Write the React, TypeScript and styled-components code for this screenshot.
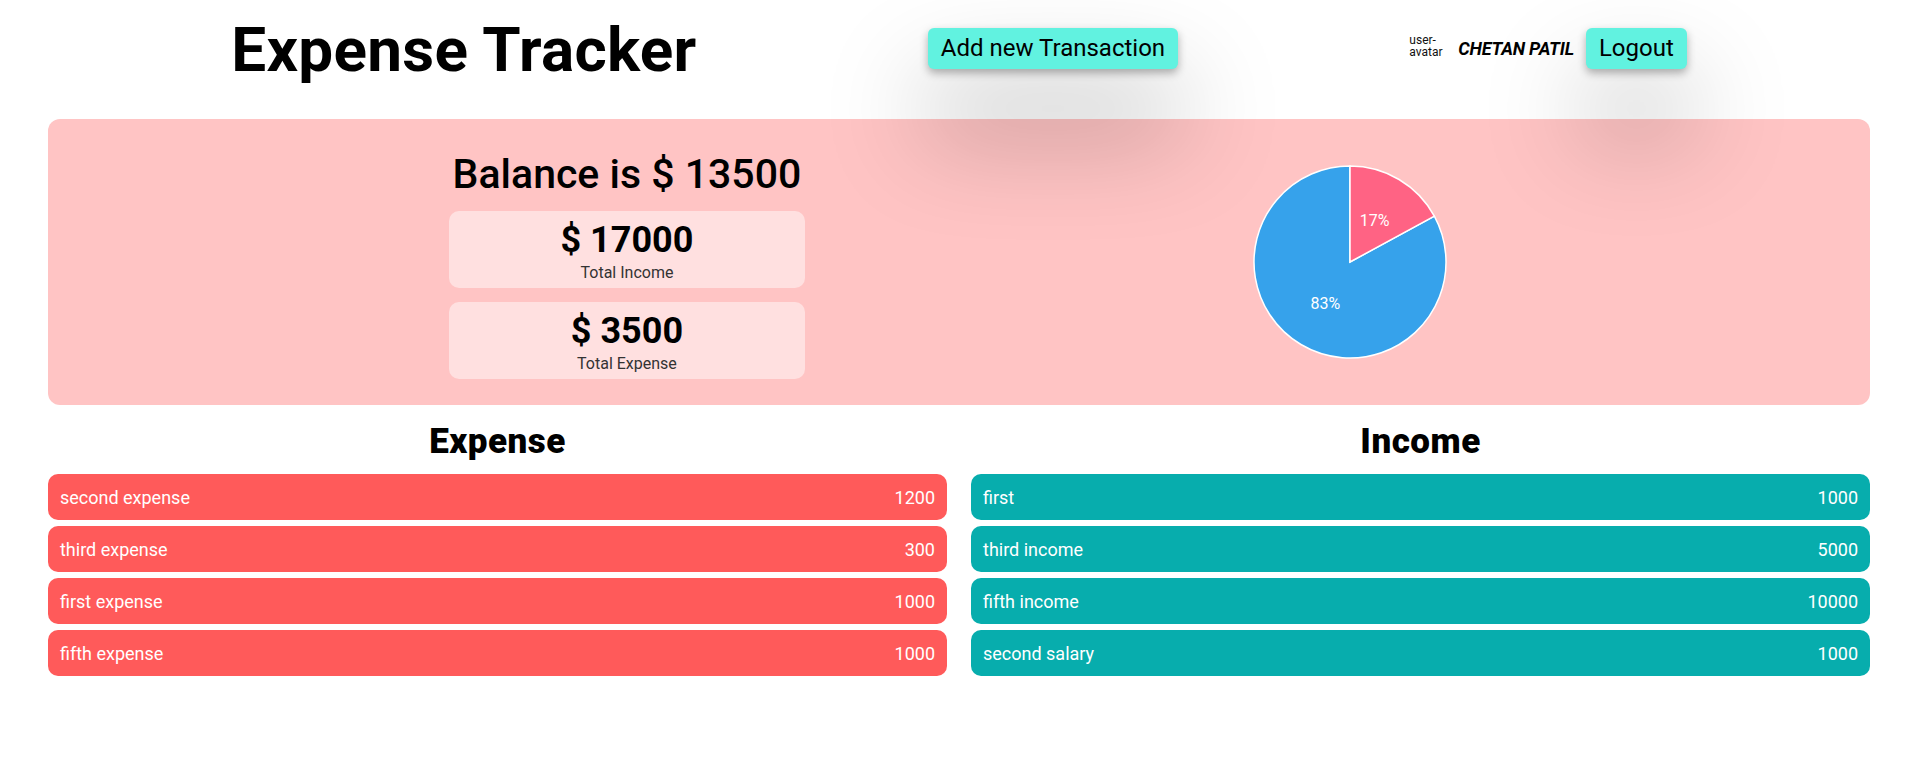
import React from "react";
import styled, { createGlobalStyle } from "styled-components";

const Global = createGlobalStyle`
  html, body { margin: 0; padding: 0; background: #ffffff; }
  body { font-family: Roboto, "Noto Sans", Arial, sans-serif; color: #000; }
  * { box-sizing: border-box; }
`;

const Page = styled.div`
  width: 100%;
  min-height: 760px;
`;

const Header = styled.header`
  display: flex;
  justify-content: space-evenly;
  align-items: center;
  height: 96px;
`;

const Title = styled.h1`
  margin: 0;
  font-size: 62px;
  font-weight: 700;
  letter-spacing: 0.3px;
  line-height: 1;
  padding-top: 4px;
`;

const ActionButton = styled.button`
  position: relative;
  z-index: 2;
  height: 41px;
  padding: 0 13px;
  border: none;
  border-radius: 6px;
  background: #61f2e0;
  color: #000;
  font-family: inherit;
  font-size: 24px;
  font-weight: 400;
  cursor: pointer;
  box-shadow: rgba(0, 0, 0, 0.3) 0px 4px 8px, rgba(0, 0, 0, 0.26) 0px 60px 100px 6px;
`;

const UserBox = styled.div`
  display: flex;
  align-items: center;
  gap: 12px;
`;

const AvatarAlt = styled.span`
  width: 37px;
  font-size: 12px;
  line-height: 12px;
  color: #111;
  margin-top: -4px;
`;

const UserName = styled.span`
  font-size: 18px;
  font-weight: 700;
  font-style: italic;
  letter-spacing: -0.2px;
`;

const SummaryPanel = styled.section`
  width: 95%;
  height: 286px;
  margin: 23px auto 0;
  border-radius: 12px;
  background: #ffc4c4;
  display: flex;
  align-items: center;
  padding-left: 401px;
  gap: 401px;
`;

const BalanceBlock = styled.div`
  width: 356px;
  display: flex;
  flex-direction: column;
  gap: 14px;
  margin-top: 6px;
`;

const BalanceText = styled.h2`
  margin: 0 -20px -1px;
  text-align: center;
  white-space: nowrap;
  font-size: 41px;
  font-weight: 500;
  line-height: 47px;
`;

const StatCard = styled.div`
  height: 77px;
  border-radius: 10px;
  background: #ffe0e0;
  display: flex;
  flex-direction: column;
  align-items: center;
  padding-top: 6px;
`;

const StatAmount = styled.div`
  font-size: 36px;
  font-weight: 700;
  line-height: 46px;
`;

const StatLabel = styled.div`
  font-size: 16px;
  line-height: 20px;
  color: #333;
`;

const ChartBox = styled.div`
  width: 288px;
  height: 286px;
  display: flex;
  align-items: center;
  justify-content: center;
`;

const Lists = styled.section`
  width: 95%;
  margin: 18px auto 0;
  display: grid;
  grid-template-columns: 1fr 1fr;
  column-gap: 24px;
`;

const Column = styled.div`
  display: flex;
  flex-direction: column;
  gap: 6px;
`;

const ColumnTitle = styled.h3`
  margin: 0 0 7px;
  text-align: center;
  font-size: 35px;
  font-weight: 900;
  line-height: 38px;
  letter-spacing: 0.5px;
`;

const Row = styled.div<{ $kind: "expense" | "income" }>`
  height: 46px;
  border-radius: 10px;
  padding: 0 12px;
  display: flex;
  align-items: center;
  justify-content: space-between;
  color: #fff;
  font-size: 18px;
  background: ${(p) => (p.$kind === "expense" ? "#ff5a5a" : "#07adad")};
`;

const expenses = [
  { name: "second expense", amount: 1200 },
  { name: "third expense", amount: 300 },
  { name: "first expense", amount: 1000 },
  { name: "fifth expense", amount: 1000 },
];

const incomes = [
  { name: "first", amount: 1000 },
  { name: "third income", amount: 5000 },
  { name: "fifth income", amount: 10000 },
  { name: "second salary", amount: 1000 },
];

function Pie() {
  const r = 96;
  const c = 97;
  const frac = 3500 / 20500;
  const a = frac * Math.PI * 2;
  const ex = c + r * Math.sin(a);
  const ey = c - r * Math.cos(a);
  const mid1 = a / 2;
  const mid2 = a + (Math.PI * 2 - a) / 2;
  const lr = r / 2;
  return (
    <svg width="194" height="194" viewBox="0 0 194 194">
      <path
        d={`M${c},${c} L${ex},${ey} A${r},${r} 0 1 1 ${c},${c - r} Z`}
        fill="#36a2eb"
        stroke="#fff"
        strokeWidth="1.5"
      />
      <path
        d={`M${c},${c} L${c},${c - r} A${r},${r} 0 0 1 ${ex},${ey} Z`}
        fill="#ff6384"
        stroke="#fff"
        strokeWidth="1.5"
      />
      <text
        x={c + lr * Math.sin(mid1)}
        y={c - lr * Math.cos(mid1)}
        fill="#fff"
        fontSize="16"
        textAnchor="middle"
        dominantBaseline="central"
        fontFamily="Roboto, sans-serif"
      >
        17%
      </text>
      <text
        x={c + lr * Math.sin(mid2)}
        y={c - lr * Math.cos(mid2)}
        fill="#fff"
        fontSize="16"
        textAnchor="middle"
        dominantBaseline="central"
        fontFamily="Roboto, sans-serif"
      >
        83%
      </text>
    </svg>
  );
}

export default function App() {
  return (
    <Page>
      <Global />
      <Header>
        <Title>Expense Tracker</Title>
        <ActionButton>Add new Transaction</ActionButton>
        <UserBox>
          <AvatarAlt>user-avatar</AvatarAlt>
          <UserName>CHETAN PATIL</UserName>
          <ActionButton>Logout</ActionButton>
        </UserBox>
      </Header>
      <SummaryPanel>
        <BalanceBlock>
          <BalanceText>Balance is $ 13500</BalanceText>
          <StatCard>
            <StatAmount>$ 17000</StatAmount>
            <StatLabel>Total Income</StatLabel>
          </StatCard>
          <StatCard>
            <StatAmount>$ 3500</StatAmount>
            <StatLabel>Total Expense</StatLabel>
          </StatCard>
        </BalanceBlock>
        <ChartBox>
          <Pie />
        </ChartBox>
      </SummaryPanel>
      <Lists>
        <Column>
          <ColumnTitle>Expense</ColumnTitle>
          {expenses.map((e) => (
            <Row key={e.name} $kind="expense">
              <span>{e.name}</span>
              <span>{e.amount}</span>
            </Row>
          ))}
        </Column>
        <Column>
          <ColumnTitle>Income</ColumnTitle>
          {incomes.map((e) => (
            <Row key={e.name} $kind="income">
              <span>{e.name}</span>
              <span>{e.amount}</span>
            </Row>
          ))}
        </Column>
      </Lists>
    </Page>
  );
}
